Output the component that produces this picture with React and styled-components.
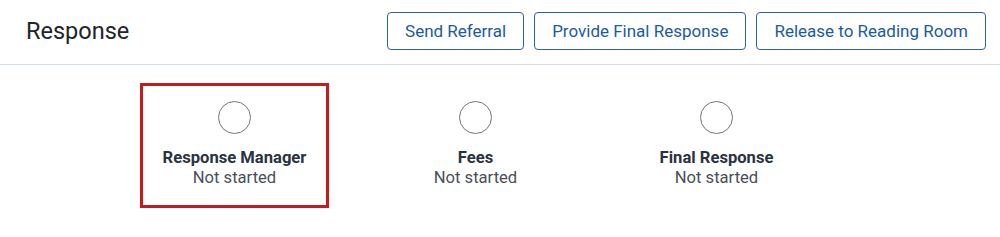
import React from "react";
import styled, { createGlobalStyle } from "styled-components";

const Global = createGlobalStyle`
  html, body { margin: 0; padding: 0; background: #fff; }
  body { font-family: Roboto, "Liberation Sans", Arial, sans-serif; }
  * { box-sizing: border-box; }
`;

const Page = styled.div`
  width: 1000px;
  height: 237px;
  background: #fff;
`;

const Header = styled.header`
  display: flex;
  align-items: center;
  justify-content: space-between;
  height: 65px;
  padding: 12px 14px 14px 26px;
  border-bottom: 1px solid #d3deeb;
`;

const Title = styled.h1`
  margin: 0;
  font-size: 23.5px;
  font-weight: 400;
  color: #212529;
`;

const Actions = styled.div`
  display: flex;
  gap: 10px;
`;

const Button = styled.button`
  height: 38px;
  padding: 0 17px;
  border: 1px solid #2a63a8;
  border-radius: 4px;
  background: #fff;
  color: #1b5aa6;
  font-family: Roboto, "Liberation Sans", Arial, sans-serif;
  font-size: 17px;
  font-weight: 400;
  cursor: pointer;
`;

const Steps = styled.div`
  display: flex;
  gap: 52px;
  padding: 18px 0 0 140px;
`;

const Step = styled.div`
  width: 189px;
  height: 125px;
  display: flex;
  flex-direction: column;
  align-items: center;
  padding-top: ${(p) => (p.$active ? 15 : 18)}px;
  border: ${(p) => (p.$active ? "3px solid #c41c1c" : "none")};
`;

const Circle = styled.div`
  width: 33px;
  height: 33px;
  border-radius: 50%;
  border: 1.5px solid #6f7580;
  margin-bottom: 14px;
`;

const StepName = styled.div`
  font-size: 16.6px;
  line-height: 20px;
  font-weight: 700;
  color: #2b3340;
`;

const StepStatus = styled.div`
  font-size: 16.6px;
  line-height: 20px;
  color: #4a4f57;
`;

const steps = [
  { name: "Response Manager", status: "Not started", active: true },
  { name: "Fees", status: "Not started" },
  { name: "Final Response", status: "Not started" },
];

export default function App() {
  return (
    <Page>
      <Global />
      <Header>
        <Title>Response</Title>
        <Actions>
          <Button>Send Referral</Button>
          <Button>Provide Final Response</Button>
          <Button>Release to Reading Room</Button>
        </Actions>
      </Header>
      <Steps>
        {steps.map((s) => (
          <Step key={s.name} $active={s.active}>
            <Circle />
            <StepName>{s.name}</StepName>
            <StepStatus>{s.status}</StepStatus>
          </Step>
        ))}
      </Steps>
    </Page>
  );
}
